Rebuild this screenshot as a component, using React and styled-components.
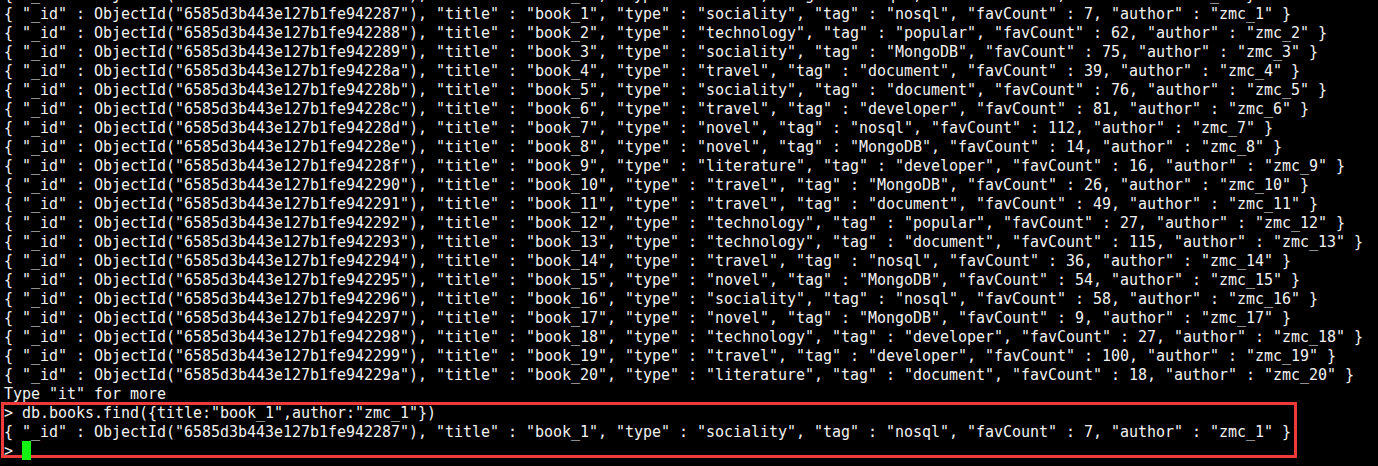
import React from "react";
import styled, { createGlobalStyle } from "styled-components";

const ID_PREFIX = "6585d3b443e127b1fe942";

const books = [
  ["286", "book_0", "novel", "nosql", 3, "zmc_0"],
  ["287", "book_1", "sociality", "nosql", 7, "zmc_1"],
  ["288", "book_2", "technology", "popular", 62, "zmc_2"],
  ["289", "book_3", "sociality", "MongoDB", 75, "zmc_3"],
  ["28a", "book_4", "travel", "document", 39, "zmc_4"],
  ["28b", "book_5", "sociality", "document", 76, "zmc_5"],
  ["28c", "book_6", "travel", "developer", 81, "zmc_6"],
  ["28d", "book_7", "novel", "nosql", 112, "zmc_7"],
  ["28e", "book_8", "novel", "MongoDB", 14, "zmc_8"],
  ["28f", "book_9", "literature", "developer", 16, "zmc_9"],
  ["290", "book_10", "travel", "MongoDB", 26, "zmc_10"],
  ["291", "book_11", "travel", "document", 49, "zmc_11"],
  ["292", "book_12", "technology", "popular", 27, "zmc_12"],
  ["293", "book_13", "technology", "document", 115, "zmc_13"],
  ["294", "book_14", "travel", "nosql", 36, "zmc_14"],
  ["295", "book_15", "novel", "MongoDB", 54, "zmc_15"],
  ["296", "book_16", "sociality", "nosql", 58, "zmc_16"],
  ["297", "book_17", "novel", "MongoDB", 9, "zmc_17"],
  ["298", "book_18", "technology", "developer", 27, "zmc_18"],
  ["299", "book_19", "travel", "developer", 100, "zmc_19"],
  ["29a", "book_20", "literature", "document", 18, "zmc_20"],
];

const docLine = ([id, title, type, tag, fav, author]) =>
  `{ "_id" : ObjectId("${ID_PREFIX}${id}"), "title" : "${title}", "type" : "${type}", "tag" : "${tag}", "favCount" : ${fav}, "author" : "${author}" }`;

const GlobalStyle = createGlobalStyle`
  html, body {
    margin: 0;
    padding: 0;
    background: #000;
  }
`;

const Screen = styled.div`
  box-sizing: border-box;
  height: 466px;
  overflow: hidden;
  display: flex;
  flex-direction: column;
  justify-content: flex-end;
  padding: 0 0 6px 4px;
  background: #000;
  color: #f2f2f2;
  font-family: "DejaVu Sans Mono", "Liberation Mono", monospace;
  font-size: 15px;
  letter-spacing: -0.03px;
`;

// rows are 19px, text sits a pixel lower than the centred default
const Line = styled.div`
  height: 19px;
  line-height: 21px;
  white-space: pre;
`;

const Marked = styled.div`
  position: relative;

  &::after {
    content: "";
    position: absolute;
    top: -1px;
    left: -3px;
    width: 1296px;
    height: 56px;
    box-sizing: border-box;
    border: 3px solid #f03a3a;
    pointer-events: none;
  }
`;

const Cursor = styled.span`
  position: relative;
  z-index: 1;
  display: inline-block;
  width: 9px;
  height: 19px;
  vertical-align: top;
  background: #12f312;
`;

const App = () => {
  return (
    <>
      <GlobalStyle />
      <Screen>
        {books.map((b) => (
          <Line key={b[0]}>{docLine(b)}</Line>
        ))}
        <Line>Type "it" for more</Line>
        <Marked>
          <Line>{'> db.books.find({title:"book_1",author:"zmc_1"})'}</Line>
          <Line>{docLine(books[1])}</Line>
          <Line>
            {"> "}
            <Cursor />
          </Line>
        </Marked>
      </Screen>
    </>
  );
};

export default App;
